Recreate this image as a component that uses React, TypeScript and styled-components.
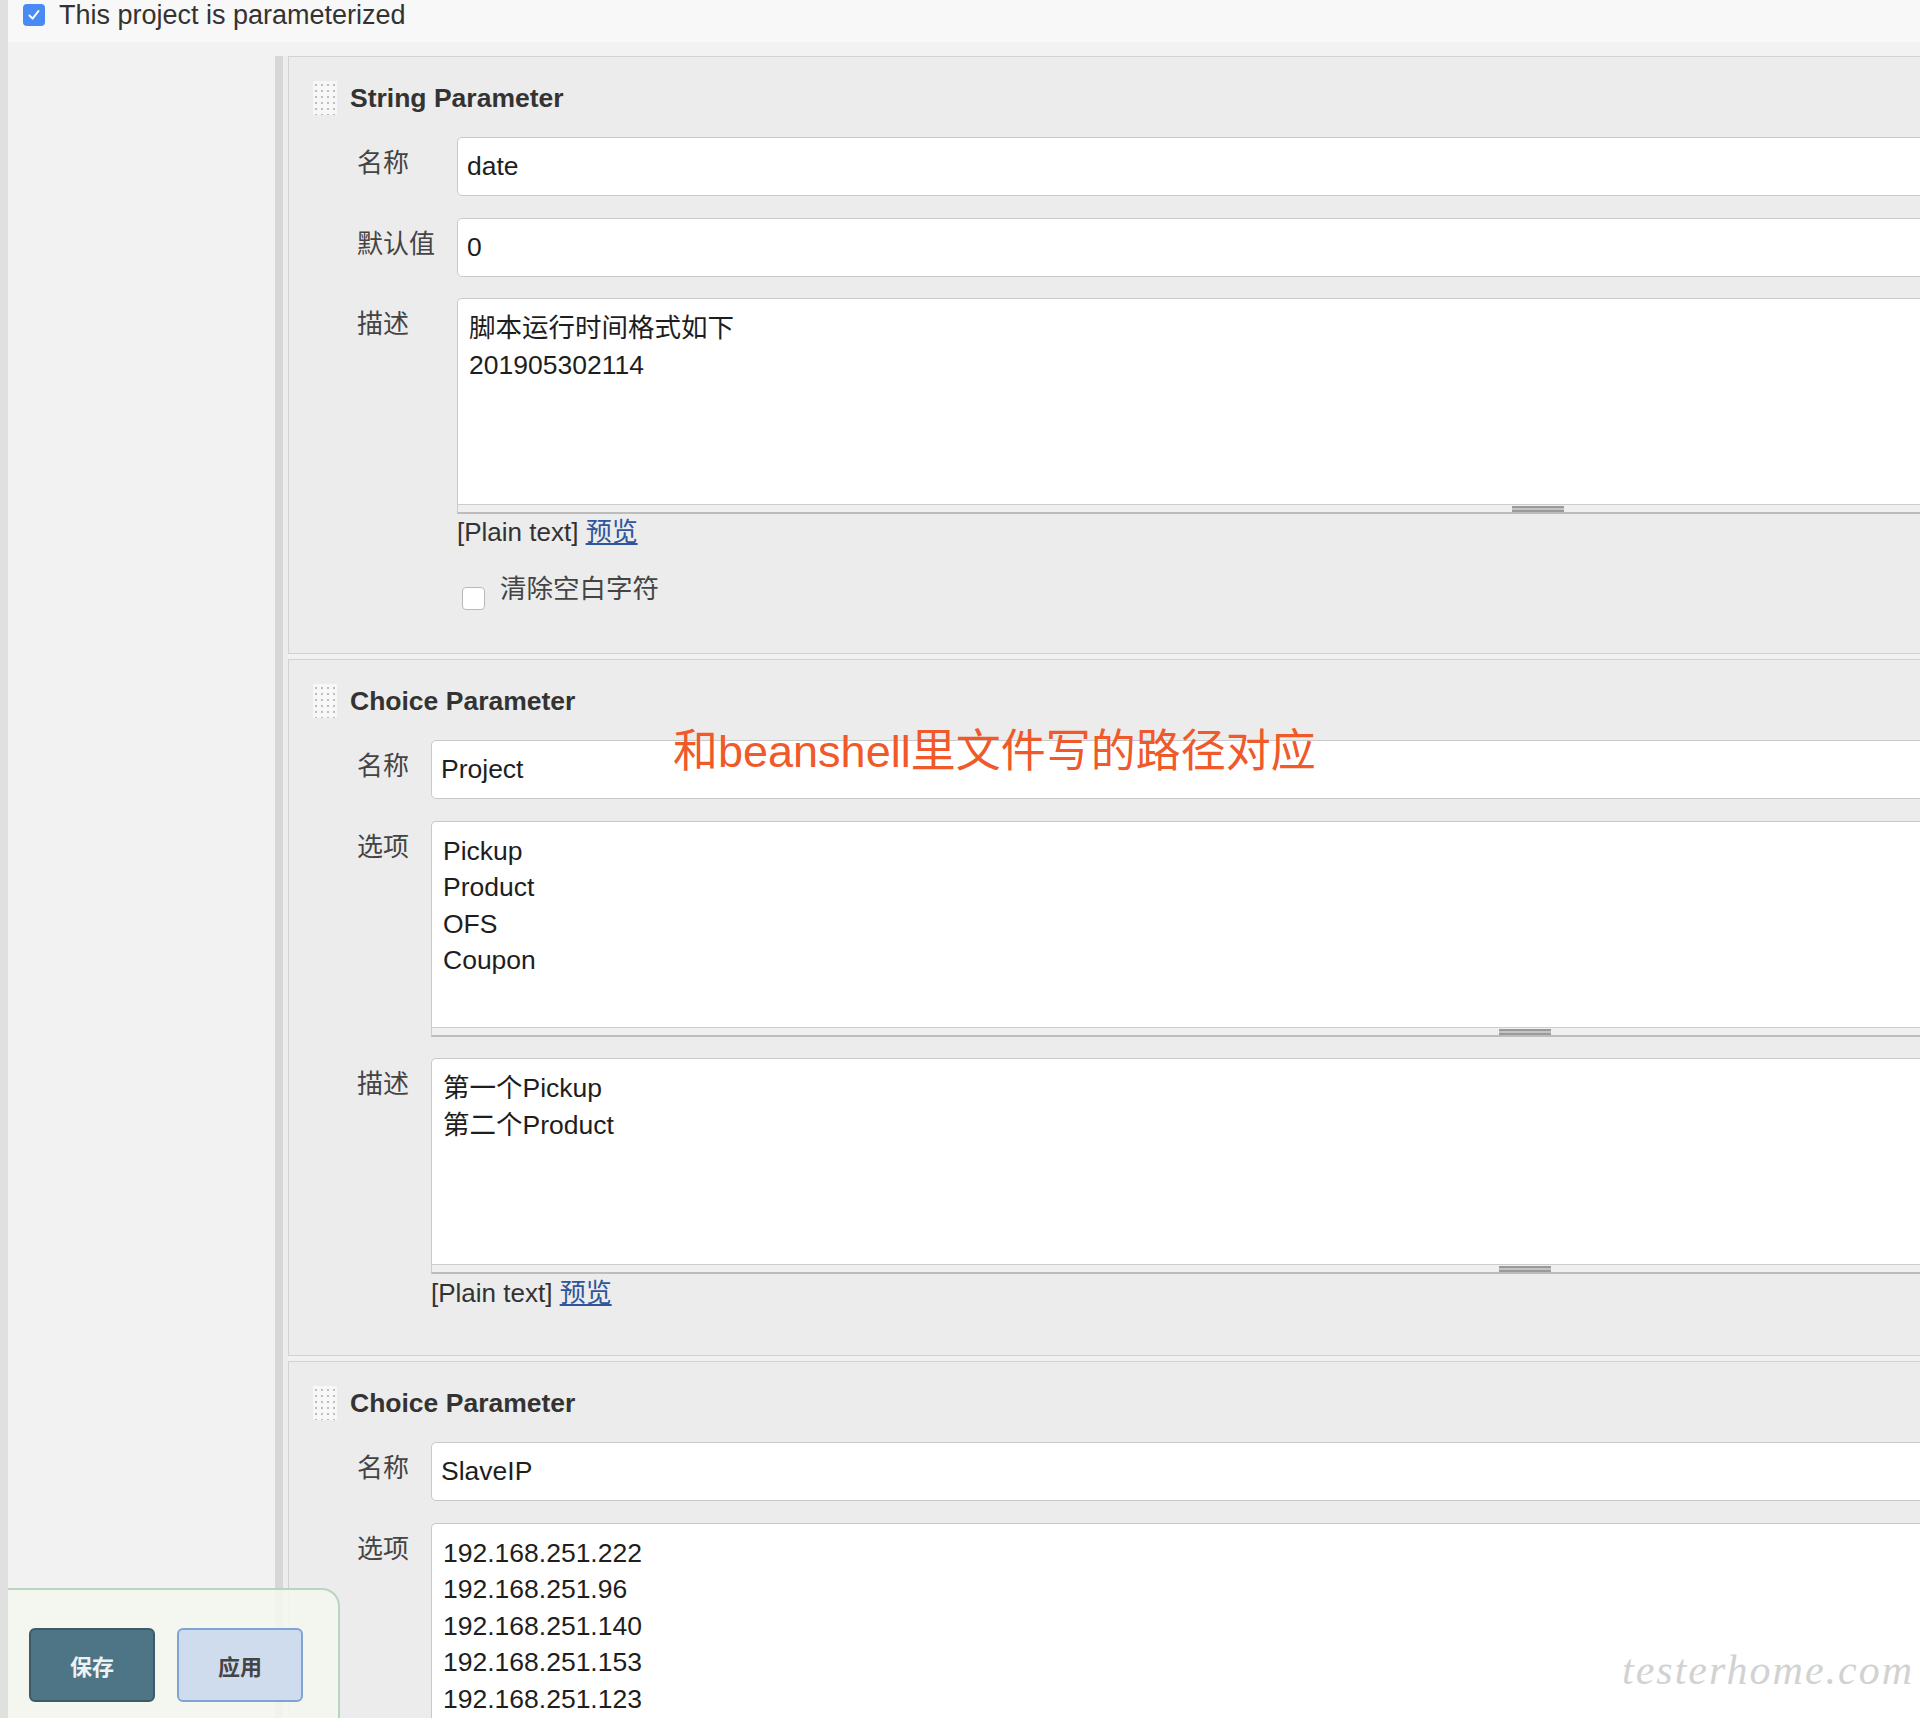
import React from 'react';
import styled, { createGlobalStyle } from 'styled-components';

const font = `"Liberation Sans", "Noto Sans CJK SC", sans-serif`;

const GlobalStyle = createGlobalStyle`
  html, body {
    margin: 0;
    padding: 0;
    background: #f2f2f2;
    overflow: hidden;
  }
  #root {
    width: 1920px;
    height: 1718px;
  }
`;

const Page = styled.div`
  position: relative;
  width: 1920px;
  height: 1718px;
  overflow: hidden;
  box-sizing: border-box;
  border-left: 8px solid #e0e0e0;
  font-family: ${font};
  display: flex;
  flex-direction: column;
  color: #333;
`;

const TopBar = styled.div`
  height: 42px;
  box-sizing: border-box;
  background: #f8f8f8;
  display: flex;
  align-items: center;
  gap: 14px;
  padding: 0 0 12px 15px;
  font-size: 27px;
  color: #333;
`;

const BlueCheck = styled.span`
  width: 22px;
  height: 22px;
  border-radius: 4px;
  background: #4a8af4;
  display: flex;
  align-items: center;
  justify-content: center;
`;

const Body = styled.div`
  flex: 1;
  display: flex;
  padding-top: 14px;
  background: #f2f2f2;
`;

const Sidebar = styled.div`
  width: 267px;
  flex-shrink: 0;
`;

const Rail = styled.div`
  width: 8px;
  flex-shrink: 0;
  background: #d7d7d7;
`;

const RailGap = styled.div`
  width: 5px;
  flex-shrink: 0;
  background: #eeeeee;
`;

const Sections = styled.div`
  width: 1700px;
  flex-shrink: 0;
  display: flex;
  flex-direction: column;
  gap: 5px;
  background: #f1f1f1;
`;

const Section = styled.div<{ $bottom: number }>`
  position: relative;
  background: #ececec;
  border: 1px solid #d2d2d2;
  border-right: none;
  padding: 24px 0 ${(p) => p.$bottom}px 24px;
`;

const Header = styled.div`
  display: flex;
  align-items: center;
  gap: 13px;
  height: 34px;
  font-size: 26.5px;
  font-weight: bold;
  color: #333;
`;

const Handle = styled.span`
  width: 24px;
  height: 34px;
  background-color: #f7f7f7;
  background-image: radial-gradient(circle, #bdbdbd 1px, transparent 1.5px);
  background-size: 6px 6px;
  background-position: 0 1px;
`;

const Rows = styled.div`
  display: flex;
  flex-direction: column;
  gap: 21.5px;
  margin-top: 22px;
`;

const Row = styled.div`
  display: flex;
  align-items: flex-start;
  padding-left: 44px;
`;

const Label = styled.div<{ $width: number }>`
  width: ${(p) => p.$width}px;
  flex-shrink: 0;
  padding-top: 11px;
  line-height: 30px;
  font-size: 26px;
  color: #444;
`;

const Field = styled.div`
  flex: 1;
  display: flex;
  flex-direction: column;
`;

const Input = styled.div`
  height: 59px;
  box-sizing: border-box;
  background: #fff;
  border: 1px solid #c9c9c9;
  border-radius: 5px;
  padding: 0 9px;
  display: flex;
  align-items: center;
  font-size: 26.5px;
  color: #1e1e1e;
`;

const TextArea = styled.div`
  height: 206px;
  box-sizing: border-box;
  background: #fff;
  border: 1px solid #c9c9c9;
  border-bottom: none;
  border-radius: 5px 5px 0 0;
  padding: 11px 11px;
  font-size: 26.5px;
  line-height: 36.5px;
  color: #1e1e1e;
  white-space: pre-line;
`;

const ResizeStrip = styled.div`
  height: 10px;
  box-sizing: border-box;
  background: #efefef;
  border-top: 1px solid #cdcdcd;
  border-bottom: 2px solid #bcbcbc;
  border-left: 1px solid #cdcdcd;
  display: flex;
  align-items: flex-end;
`;

const Grip = styled.span<{ $offset: number }>`
  margin-left: ${(p) => p.$offset}px;
  width: 52px;
  height: 6px;
  box-sizing: border-box;
  border-top: 2px solid #9a9a9a;
  border-bottom: 2px solid #9a9a9a;
  background: #c4c4c4;
`;

const PlainLine = styled.div<{ $top: number; $indent: number }>`
  margin-top: ${(p) => p.$top}px;
  padding-left: ${(p) => p.$indent}px;
  line-height: 30px;
  font-size: 26px;
  color: #333;
`;

const Link = styled.a`
  color: #2f559c;
  text-decoration: underline;
`;

const CheckRow = styled.div<{ $indent: number }>`
  display: flex;
  align-items: flex-start;
  gap: 15px;
  margin-top: 27px;
  padding-left: ${(p) => p.$indent + 5}px;
  line-height: 30px;
  font-size: 26.5px;
  color: #444;
`;

const EmptyCheck = styled.span`
  width: 23px;
  height: 23px;
  box-sizing: border-box;
  margin-top: 13px;
  background: #fff;
  border: 1px solid #b9b9b9;
  border-radius: 4px;
`;

const Note = styled.div`
  position: absolute;
  left: 384px;
  top: 66px;
  font-size: 45px;
  line-height: 52px;
  color: #f0592a;
  white-space: nowrap;
`;

const Watermark = styled.div`
  position: absolute;
  right: 6px;
  bottom: 24px;
  font-family: "Liberation Serif", serif;
  font-style: italic;
  font-size: 42px;
  letter-spacing: 2px;
  color: #d2d2d2;
`;

const SaveBar = styled.div`
  position: absolute;
  left: -8px;
  bottom: 0;
  width: 340px;
  height: 130px;
  box-sizing: border-box;
  background: rgba(244, 247, 240, 0.9);
  border-top: 2px solid #b9d5be;
  border-right: 2px solid #b9d5be;
  border-top-right-radius: 18px;
  display: flex;
  gap: 22px;
  padding: 38px 0 0 29px;
`;

const Button = styled.button<{ $primary?: boolean }>`
  width: 126px;
  height: 74px;
  border-radius: 6px;
  border: 2px solid ${(p) => (p.$primary ? '#3d5a68' : '#7fa3d5')};
  background: ${(p) => (p.$primary ? '#4d7585' : '#cfdcee')};
  color: ${(p) => (p.$primary ? '#eef2f4' : '#444')};
  font-family: ${font};
  font-weight: bold;
  font-size: 22px;
  padding: 0;
`;

type FieldRow = {
  label: string;
  kind: 'input' | 'area';
  value: string;
  grip?: number;
};

const TextRow: React.FC<{ row: FieldRow; labelWidth: number }> = ({ row, labelWidth }) => (
  <Row>
    <Label $width={labelWidth}>{row.label}</Label>
    <Field>
      {row.kind === 'input' ? (
        <Input>{row.value}</Input>
      ) : (
        <>
          <TextArea>{row.value}</TextArea>
          <ResizeStrip>
            <Grip $offset={row.grip ?? 1054} />
          </ResizeStrip>
        </>
      )}
    </Field>
  </Row>
);

const PlainText: React.FC<{ top: number; indent: number }> = ({ top, indent }) => (
  <PlainLine $top={top} $indent={indent}>
    [Plain text] <Link>预览</Link>
  </PlainLine>
);

const stringRows: FieldRow[] = [
  { label: '名称', kind: 'input', value: 'date' },
  { label: '默认值', kind: 'input', value: '0' },
  { label: '描述', kind: 'area', value: '脚本运行时间格式如下\n201905302114', grip: 1054 },
];

const projectRows: FieldRow[] = [
  { label: '名称', kind: 'input', value: 'Project' },
  { label: '选项', kind: 'area', value: 'Pickup\nProduct\nOFS\nCoupon', grip: 1067 },
  { label: '描述', kind: 'area', value: '第一个Pickup\n第二个Product', grip: 1067 },
];

const slaveRows: FieldRow[] = [
  { label: '名称', kind: 'input', value: 'SlaveIP' },
  {
    label: '选项',
    kind: 'area',
    value: '192.168.251.222\n192.168.251.96\n192.168.251.140\n192.168.251.153\n192.168.251.123',
    grip: 1067,
  },
];

const App: React.FC = () => {
  return (
    <>
      <GlobalStyle />
      <Page>
        <TopBar>
          <BlueCheck>
            <svg width="14" height="14" viewBox="0 0 14 14">
              <path d="M2.5 7.5 L5.6 10.6 L11.5 3" fill="none" stroke="#fff" strokeWidth="2" strokeLinecap="round" strokeLinejoin="round" />
            </svg>
          </BlueCheck>
          <span>This project is parameterized</span>
        </TopBar>
        <Body>
          <Sidebar />
          <Rail />
          <RailGap />
          <Sections>
            <Section $bottom={43}>
              <Header>
                <Handle />
                String Parameter
              </Header>
              <Rows>
                {stringRows.map((r, i) => (
                  <TextRow key={i} row={r} labelWidth={100} />
                ))}
              </Rows>
              <PlainText top={3} indent={144} />
              <CheckRow $indent={144}>
                <EmptyCheck />
                <span>清除空白字符</span>
              </CheckRow>
            </Section>

            <Section $bottom={47}>
              <Header>
                <Handle />
                Choice Parameter
              </Header>
              <Rows>
                {projectRows.map((r, i) => (
                  <TextRow key={i} row={r} labelWidth={74} />
                ))}
              </Rows>
              <PlainText top={4} indent={118} />
              <Note>和beanshell里文件写的路径对应</Note>
            </Section>

            <Section $bottom={40}>
              <Header>
                <Handle />
                Choice Parameter
              </Header>
              <Rows>
                {slaveRows.map((r, i) => (
                  <TextRow key={i} row={r} labelWidth={74} />
                ))}
              </Rows>
            </Section>
          </Sections>
        </Body>
        <Watermark>testerhome.com</Watermark>
        <SaveBar>
          <Button $primary>保存</Button>
          <Button>应用</Button>
        </SaveBar>
      </Page>
    </>
  );
};

export default App;
